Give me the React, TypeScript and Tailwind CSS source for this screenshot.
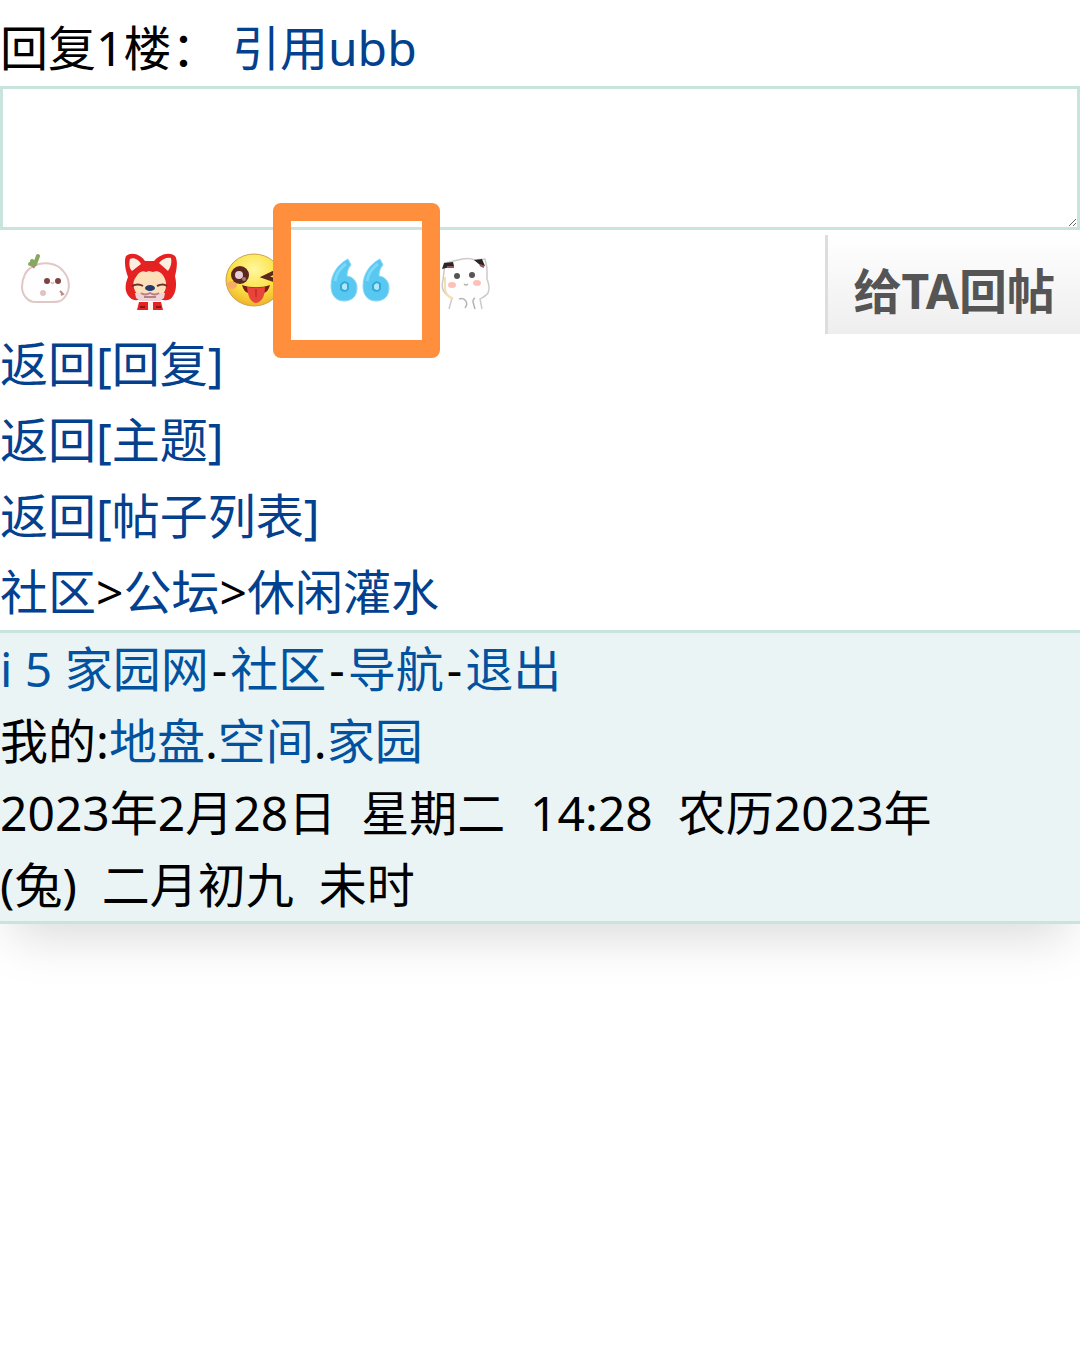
import type { ReactNode } from "react";

function FaceIcon() {
  return (
    <svg className="h-full w-full" viewBox="0 0 60 60" fill="none">
      <path
        d="M17 15C27 9 42 10 49 20c7 9 6 19 0 26-3 4-7 4-13 4H20c-7 0-13-7-13-15 0-9 4-17 10-20Z"
        fill="#fffefe"
        stroke="#dfc8c6"
        strokeWidth="2"
      />
      <path d="M17 15l3-4" stroke="#a98a7c" strokeWidth="5" />
      <path d="M15 12l5 0 3-8M20 11l-3-2" stroke="#86a85f" strokeWidth="4" strokeLinecap="round" strokeLinejoin="round" />
      <circle cx="32" cy="29" r="3" fill="#7d4340" />
      <circle cx="43" cy="29" r="3" fill="#7d4340" />
      <path d="M36 30q1 3 3 0" stroke="#e3b8b5" strokeWidth="1.5" />
      <circle cx="28" cy="41" r="3" fill="#e2c3c1" />
      <path d="M45 39l3 3-2 1" stroke="#b98c89" strokeWidth="2" />
    </svg>
  );
}

function FoxIcon() {
  return (
    <svg className="h-full w-full" viewBox="0 0 60 60" fill="none">
      <path
        d="M6 4c6-5 15-1 19 5h9c5-6 15-10 21-5 3 4 2 13 0 20 2 8 1 16-2 20-2 4-6 5-10 4H18c-6 1-10-3-12-9-1-5 0-9 2-14C5 18 4 8 6 4Z"
        fill="#e52222"
      />
      <path d="M10 7c4-2 9 1 11 5l-9 7c-3-3-3-8-2-12ZM51 6c-4-1-9 1-12 5l9 8c3-4 4-9 3-13Z" fill="#fdeee2" />
      <path d="M16 25c3-5 6-7 10-5l3-1 4 1c5-2 9 1 11 5 3 5 3 12-1 17H17c-4-5-5-13-1-17Z" fill="#fde0b9" />
      <path d="M15 41h30l-1 5-4 3H20l-4-3Z" fill="#eed4d5" />
      <path d="M12 34q6-3 11 0M37 34q6-3 10 0" stroke="#6b302c" strokeWidth="2" />
      <ellipse cx="30" cy="36" rx="5" ry="3" fill="#203a72" />
      <path d="M21 41q4 3 9 0 5 3 9 0M24 45h12" stroke="#b5808a" strokeWidth="2" />
      <path d="M19 50h22l2 8H17Z" fill="#e52222" />
      <path d="M28 50h5v8h-5Z" fill="#fff2ea" />
      <path d="M20 55h5M36 55h5" stroke="#8f1515" strokeWidth="2" />
    </svg>
  );
}

function WinkIcon() {
  return (
    <svg className="h-full w-full" viewBox="0 0 60 60" fill="none">
      <defs>
        <radialGradient id="wink" cx="50%" cy="30%" r="70%">
          <stop offset="0" stopColor="#fff8a0" />
          <stop offset="0.6" stopColor="#fbe043" />
          <stop offset="1" stopColor="#f0b32b" />
        </radialGradient>
      </defs>
      <ellipse cx="29" cy="28" rx="28" ry="26" fill="url(#wink)" stroke="#c9a34e" strokeWidth="1" />
      <ellipse cx="7" cy="33" rx="5" ry="4" fill="#f6ad63" />
      <circle cx="15" cy="23" r="9" fill="#5c271d" />
      <circle cx="14" cy="23" r="4" fill="#e6cfd6" />
      <circle cx="19" cy="27" r="2" fill="#a77c75" />
      <path d="M50 20l-10 5 9 3" stroke="#5c271d" strokeWidth="4" />
      <path d="M17 33c8 3 20 3 28 0-1 4-3 7-6 8H23c-3-1-5-4-6-8Z" fill="#7b1b17" />
      <path d="M22 35c6 1 12 1 18 0 0 9-3 15-9 16-6-1-8-7-9-16Z" fill="#e94439" />
      <path d="M31 37v8" stroke="#c9332c" strokeWidth="2" />
    </svg>
  );
}

function QuoteIcon() {
  return (
    <svg className="h-full w-full" viewBox="0 0 60 60">
      {[0, 32].map((x) => (
        <g key={x} transform={`translate(${x} 0)`}>
          <path
            d="M18 7C8 12 1 22 1 34c0 9 5 15 13 15 8 0 13-5 13-13 0-7-4-11-10-12 0-4 1-8 4-11-1-2-2-4-3-6Z"
            fill="#59c8f1"
            stroke="#8bd8f4"
            strokeWidth="1"
          />
          <path d="M5 29c1-7 5-13 11-17" stroke="#7ad8f8" strokeWidth="3" fill="none" />
          <path d="M11 37v-4q3-5 7-1v5q-3 4-7 0Z" fill="#b4e6f7" stroke="#2dacdb" strokeWidth="2" />
        </g>
      ))}
    </svg>
  );
}

function CatIcon() {
  return (
    <svg className="h-full w-full" viewBox="0 0 60 60" fill="none">
      <path
        d="M14 57l3-11C8 42 6 35 8 28l2-17c6-1 8-2 13-3 6-2 12-2 17 0l10-1 2 9v11c2 5 3 10 1 14-3 4-6 5-8 6l2 10"
        fill="#fffefe"
        stroke="#cfcaca"
        strokeWidth="1.5"
      />
      <path d="M7 17l2-6 9-1 1 4ZM39 8l8-1 3 7-5-1Z" fill="#2e2424" />
      <path d="M12 15h7M45 13l4 2" stroke="#8e5656" strokeWidth="2" />
      <path d="M10 25v12q1 7 8 10" stroke="#f5dfae" strokeWidth="2" />
      <circle cx="22" cy="24" r="3" fill="#555" />
      <circle cx="37" cy="23" r="3" fill="#555" />
      <ellipse cx="17" cy="33" rx="4" ry="3" fill="#ffc1b7" />
      <ellipse cx="42" cy="31" rx="4" ry="3" fill="#ffc1b7" />
      <path d="M29 32q2 2 4 0M24 47c6-2 10 4 6 9M40 46c-4 2-1 6 0 11" stroke="#b7b2b2" strokeWidth="1.5" />
    </svg>
  );
}

const emojis = [
  { label: "笑脸", icon: <FaceIcon /> },
  { label: "阿狸", icon: <FoxIcon /> },
  { label: "眨眼", icon: <WinkIcon /> },
  { label: "引用", icon: <QuoteIcon />, marked: true },
  { label: "小猫", icon: <CatIcon /> },
];

function Link({ children }: { children: ReactNode }) {
  return <a href="#">{children}</a>;
}

function Dash() {
  return <span className="mx-[3px]">-</span>;
}

export default function App() {
  return (
    <main className="min-h-screen bg-white font-['Noto_Sans','Noto_Sans_CJK_SC',sans-serif] text-[48px] leading-[76px] text-black">
      <div className="shadow-[0_24px_48px_-12px_rgba(0,0,0,0.15)]">
        <form className="text-[#03418f]" onSubmit={(e) => e.preventDefault()}>
          <div className="pt-[10px]">
            <label htmlFor="reply" className="text-black">回复1楼：</label> <Link>引用ubb</Link>
          </div>
          <textarea
            id="reply"
            className="block h-36 w-full resize-y border-3 border-[#c9e4dd] bg-white px-2 outline-none"
          />
          <div className="flex h-24 items-start justify-between">
            <div className="flex gap-[45px] pt-[22px] pl-[15px]">
              {emojis.map((e) => (
                <button key={e.label} type="button" aria-label={e.label} className={e.marked ? "relative z-10 h-15 w-15" : "h-15 w-15"}>
                  {e.icon}
                  {e.marked && (
                    <span className="absolute -top-[49px] -left-[57px] h-[155px] w-[167px] rounded-lg border-18 border-[#ff8f3c]" />
                  )}
                </button>
              ))}
            </div>
            <button
              type="submit"
              className="mt-[5px] h-[99px] border-l-3 border-[#ddd] bg-linear-to-b from-white to-[#eee] px-[25px] pt-3 font-bold text-[#555]"
            >
              给TA回帖
            </button>
          </div>
        </form>

        <nav className="text-[#03418f]">
          <div><Link>返回[回复]</Link></div>
          <div><Link>返回[主题]</Link></div>
          <div><Link>返回[帖子列表]</Link></div>
          <div>
            <Link>社区</Link>
            <span className="text-black">&gt;</span>
            <Link>公坛</Link>
            <span className="text-black">&gt;</span>
            <Link>休闲灌水</Link>
          </div>
        </nav>

        <footer className="border-y-3 border-[#c9e4dd] bg-[#eaf4f5] leading-[72px]">
          <div className="[&_a]:text-[#0252a0]">
            <Link>i 5 家园网</Link><Dash /><Link>社区</Link><Dash /><Link>导航</Link><Dash /><Link>退出</Link>
          </div>
          <div className="[&_a]:text-[#0252a0]">
            我的:<Link>地盘</Link>.<Link>空间</Link>.<Link>家园</Link>
          </div>
          <p className="whitespace-pre-wrap">
            {"2023年2月28日  星期二  14:28  农历2023年\n(兔)  二月初九  未时"}
          </p>
        </footer>
      </div>
    </main>
  );
}
